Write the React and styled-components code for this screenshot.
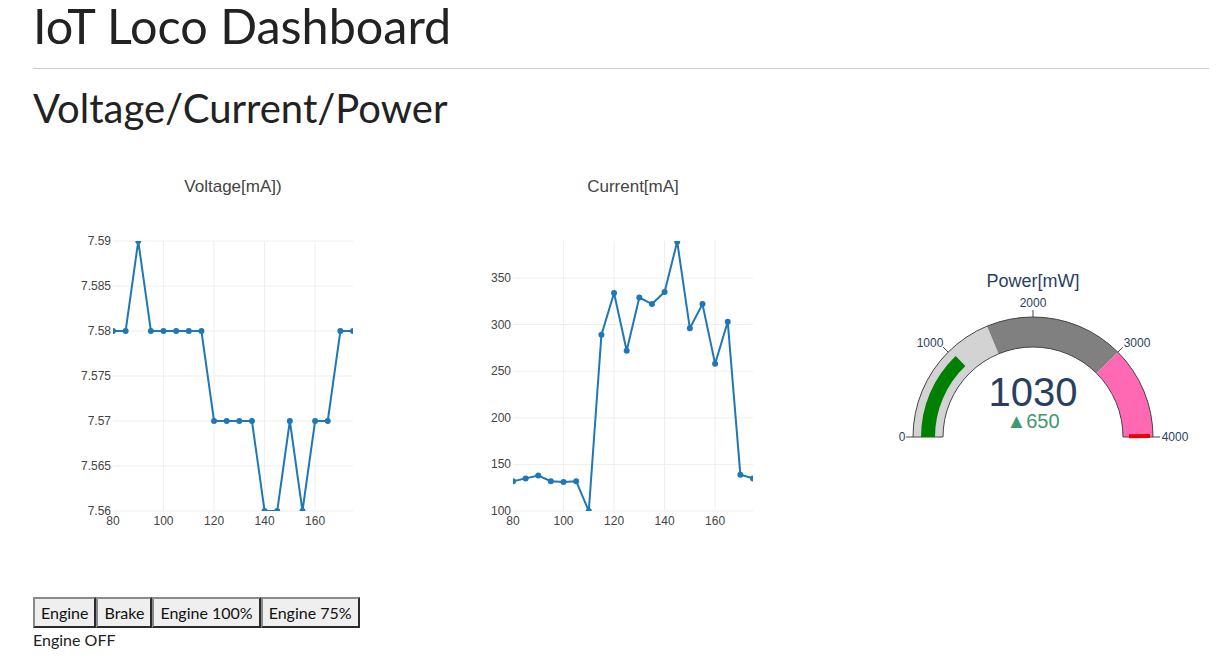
import React from 'react';
import styled, {createGlobalStyle} from 'styled-components';

const GlobalStyle = createGlobalStyle`
    html { overflow: hidden; }
    body {
        margin: 8px;
        font-family: Lato, "Noto Sans", sans-serif;
        color: #222;
        background: #fff;
    }
`

const Page = styled.div`
    padding-left: 25px;
`

const Title = styled.h1`
    font-size: 48.5px;
    font-weight: 400;
    line-height: 1.1;
    margin: -9px 0 0;
`

const Rule = styled.hr`
    border: 0;
    height: 1px;
    background: #ccc;
    width: calc(100vw - 33px);
    margin: 16px 0 17px;
`

const Section = styled.h2`
    font-size: 40px;
    font-weight: 400;
    line-height: 1.1;
    margin: 0;
`

const ChartRow = styled.div`
    display: flex;
    margin-top: 11px;
`

const ChartBox = styled.div`
    flex: 0 0 400px;
    width: 400px;
    height: 450px;
    svg { display: block; font-family: "Liberation Sans", Arial, sans-serif; }
`

const ButtonBar = styled.div`
    display: flex;
    margin-top: 6px;
`

const Button = styled.button`
    font-family: Lato, "Noto Sans", sans-serif;
    font-size: 16px;
    color: #111;
    background: #efefef;
    border: 2px solid;
    border-color: #8a8a8a #2a2a2a #2a2a2a #8a8a8a;
    padding: 4px 6px;
    line-height: 19px;
    margin: 0;
`

const Status = styled.div`
    font-size: 16px;
    margin-top: 2px;
`

// plot area inside each 400x450 graph
const PL = 80, PR = 320, PT = 100, PB = 370;

const xs = [80,85,90,95,100,105,110,115,120,125,130,135,140,145,150,155,160,165,170,175];
const voltage = [7.58,7.58,7.59,7.58,7.58,7.58,7.58,7.58,7.57,7.57,7.57,7.57,7.56,7.56,7.57,7.56,7.57,7.57,7.58,7.58];
const current = [132,135,138,132,131,132,100,289,334,272,329,322,335,389,296,322,258,303,139,135];

const LineChart = ({id, title, ys, yMin, yMax, yTicks, fmt}) => {
    const sx = (v) => PL + (v - 80) / 95 * (PR - PL);
    const sy = (v) => PB - (v - yMin) / (yMax - yMin) * (PB - PT);
    const pts = xs.map((x, i) => `${sx(x)},${sy(ys[i])}`).join(' ');
    return (
        <ChartBox>
            <svg width="400" height="450">
                <defs>
                    <clipPath id={id}><rect x={PL} y={PT} width={PR - PL} height={PB - PT}/></clipPath>
                </defs>
                <text x="200" y="51" textAnchor="middle" fontSize="17" fill="#444">{title}</text>
                {[100,120,140,160].map(t => (
                    <line key={t} x1={sx(t)} x2={sx(t)} y1={PT} y2={PB} stroke="#eee"/>
                ))}
                {yTicks.map(t => (
                    <line key={t} x1={PL} x2={PR} y1={sy(t)} y2={sy(t)} stroke="#eee"/>
                ))}
                <g clipPath={`url(#${id})`}>
                    <polyline points={pts} fill="none" stroke="#1f77b4" strokeWidth="2"/>
                    {xs.map((x, i) => <circle key={x} cx={sx(x)} cy={sy(ys[i])} r="3" fill="#1f77b4"/>)}
                </g>
                {yTicks.map(t => (
                    <text key={t} x={PL - 2} y={sy(t) + 4} textAnchor="end" fontSize="12" fill="#444">{fmt(t)}</text>
                ))}
                {[80,100,120,140,160].map(t => (
                    <text key={t} x={sx(t)} y={PB + 14} textAnchor="middle" fontSize="12" fill="#444">{t}</text>
                ))}
            </svg>
        </ChartBox>
    )
}

// gauge geometry
const CX = 200, CY = 296, RO = 120, RI = 90, MAX = 4000;
const ang = (v) => Math.PI - v / MAX * Math.PI;
const pt = (v, r) => [CX + r * Math.cos(ang(v)), CY - r * Math.sin(ang(v))];

const sector = (a, b, r1, r2) => {
    const [x1, y1] = pt(a, r2), [x2, y2] = pt(b, r2);
    const [x3, y3] = pt(b, r1), [x4, y4] = pt(a, r1);
    return `M${x1},${y1} A${r2},${r2} 0 0 1 ${x2},${y2} L${x3},${y3} A${r1},${r1} 0 0 0 ${x4},${y4} Z`;
}

// tick label centres around the dial
const gaugeTicks = [
    {v: 0, x: 69, y: 296},
    {v: 1000, x: 97, y: 202},
    {v: 2000, x: 200, y: 162},
    {v: 3000, x: 304, y: 202},
    {v: 4000, x: 342, y: 296},
];

const Gauge = ({value, delta}) => {
    const [tx1, ty1] = pt(3990, 96), [tx2, ty2] = pt(3990, 117);
    return (
        <ChartBox>
            <svg width="400" height="450">
                <text x={CX} y="146" textAnchor="middle" fontSize="18" fill="#2a3f5f">Power[mW]</text>
                <path d={sector(0, 1500, RI, RO)} fill="#d3d3d3"/>
                <path d={sector(1500, 3000, RI, RO)} fill="#808080"/>
                <path d={sector(3000, 4000, RI, RO)} fill="#ff69b4"/>
                <path d={sector(0, MAX, RI, RO)} fill="none" stroke="#444" strokeWidth="1"/>
                <path d={sector(0, value, 98, 112)} fill="#008000"/>
                <line x1={tx1} y1={ty1} x2={tx2} y2={ty2} stroke="#e00" strokeWidth="4"/>
                {gaugeTicks.map(({v, x, y}) => {
                    const [a1, b1] = pt(v, RO), [a2, b2] = pt(v, RO + 7);
                    return (
                        <g key={v}>
                            <line x1={a1} y1={b1} x2={a2} y2={b2} stroke="#444"/>
                            <text x={x} y={y + 4} textAnchor="middle" fontSize="12" fill="#2a3f5f">{v}</text>
                        </g>
                    )
                })}
                <text x={CX} y="265" textAnchor="middle" fontSize="40" fill="#2a3f5f">{value}</text>
                <text x={CX} y="287" textAnchor="middle" fontSize="20" fill="#3d9970">▲{delta}</text>
            </svg>
        </ChartBox>
    )
}

const App = () => {
    return (
        <Page>
            <GlobalStyle/>
            <Title>IoT Loco Dashboard</Title>
            <Rule/>
            <Section>Voltage/Current/Power</Section>
            <ChartRow>
                <LineChart id="clipV" title="Voltage[mA])" ys={voltage} yMin={7.56} yMax={7.59}
                           yTicks={[7.56, 7.565, 7.57, 7.575, 7.58, 7.585, 7.59]} fmt={t => String(+t.toFixed(3))}/>
                <LineChart id="clipC" title="Current[mA]" ys={current} yMin={100} yMax={389.7}
                           yTicks={[100, 150, 200, 250, 300, 350]} fmt={t => t}/>
                <Gauge value={1030} delta={650}/>
            </ChartRow>
            <ButtonBar>
                <Button>Engine</Button>
                <Button>Brake</Button>
                <Button>Engine 100%</Button>
                <Button>Engine 75%</Button>
            </ButtonBar>
            <Status>Engine OFF</Status>
        </Page>
    )
}

export default App;
